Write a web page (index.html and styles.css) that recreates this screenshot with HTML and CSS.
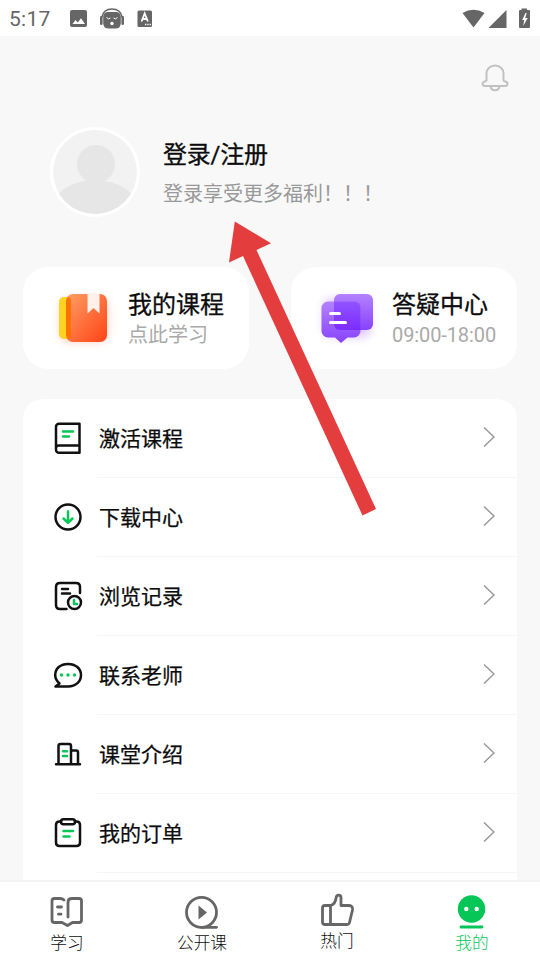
FILE: index.html
```html
<!DOCTYPE html>
<html lang="zh-CN">
<head>
<meta charset="utf-8">
<title>我的</title>
<link rel="stylesheet" href="styles.css">
</head>
<body>
<div class="screen">
  <header class="status">
    <span class="time">5:17</span>
    <svg class="status-left" width="84" height="22" viewBox="0 0 84 22">
      <rect x="1" y="2" width="17" height="17" rx="2" fill="#666"/>
      <path d="M3.500 16l3-4 2.300 2.400 3.200-4.200 4 5.800z" fill="#fff"/>
      <path d="M38 4h10q3.800 1 3.800 5v6q0 5.500-5.500 5.500h-6.600q-5.500 0-5.500-5.500V9q0-4 3.800-5z" fill="#666"/>
      <g fill="#666"><rect x="31" y="8" width="2.600" height="9" rx="1.300"/><rect x="52.400" y="8" width="2.600" height="9" rx="1.300"/></g>
      <path d="M33 9Q34.500 1 43 1T53 9" fill="none" stroke="#666" stroke-width="1.500"/>
      <path d="M37.500 9.500q2 2.500 4 .5M44.500 10q2 2 4-.5" fill="none" stroke="#fff" stroke-width="1"/>
      <circle cx="43" cy="15.500" r="1.700" fill="#fff"/>
      <rect x="68.500" y="2.500" width="14.500" height="16.500" rx="1.500" fill="#666"/>
      <path d="M72.500 13.500l3.200-8 3.200 8M73.500 11h4.500" fill="none" stroke="#fff" stroke-width="1.800"/>
      <path d="M76 16.500h6" stroke="#fff" stroke-width="1.300" stroke-dasharray="1.300 1"/>
    </svg>
    <svg class="status-right" width="70" height="22" viewBox="0 0 70 22">
      <g fill="#666"><path d="M.5 5Q11.500-1.500 22.500 5L11.500 19.500z"/><path d="M26.500 20L44.500 2v18z"/><path d="M59.500 2V.5h5.500V2h2q1 0 1 1v16q0 1-1 1h-9q-1 0-1-1V3q0-1 1-1z"/></g>
      <path d="M63.500 5l-3.300 7h2l-1 6 4.500-8h-2.500l1.500-5z" fill="#fff"/>
    </svg>
  </header>

  <div class="toolbar">
    <svg width="30" height="30" viewBox="0 0 30 30" fill="none" stroke="#c1c1c1" stroke-width="2">
      <path d="M6.500 17.500V10.500a8.500 8 0 0 1 17 0v7c0 .8 4 .7 4 3s-1 2.500-2.500 2.500H5c-1.500 0-2.500-.5-2.500-2.500s4-2.200 4-3z"/>
      <path d="M10.500 23.500c1 5 8 5 9 0"/>
    </svg>
  </div>

  <section class="profile">
    <svg width="90" height="90" viewBox="0 0 90 90">
      <defs><clipPath id="face"><circle cx="45" cy="45" r="42"/></clipPath></defs>
      <circle cx="45" cy="45" r="45" fill="#fff"/>
      <circle cx="45" cy="45" r="42" fill="#f2f2f2"/>
      <g clip-path="url(#face)" fill="#e6e6e6"><circle cx="46" cy="37" r="19"/><ellipse cx="45" cy="82" rx="43" ry="29"/></g>
    </svg>
    <div class="profile-text">
      <div class="title">登录/注册</div>
      <div class="hint">登录享受更多福利！！！</div>
    </div>
  </section>

  <section class="cards">
    <div class="card">
      <svg width="80" height="80" viewBox="0 0 80 80">
        <defs>
          <linearGradient id="book" x1="0" y1="0" x2="1" y2="1"><stop offset="0" stop-color="#ff9f65"/><stop offset="1" stop-color="#ff4316"/></linearGradient>
          <filter id="glow" x="-50%" y="-50%" width="200%" height="200%"><feGaussianBlur stdDeviation="5"/></filter>
        </defs>
        <rect x="13" y="22" width="46" height="42" rx="7" fill="#ff5a30" opacity=".35" filter="url(#glow)"/>
        <rect x="11" y="20" width="12" height="42" rx="5" fill="#ffd321"/>
        <rect x="18" y="17" width="41" height="48" rx="7" fill="url(#book)"/>
        <path d="M18 24q0-3 3-4 2 1 2 5v32q0 4-2 5-3-2-3-5z" fill="#ff7100"/>
        <path d="M39.500 16.500h12v20L45.500 31 39.500 36.500z" fill="#fff0ea"/>
      </svg>
      <div class="card-text"><div class="title">我的课程</div><div class="hint">点此学习</div></div>
    </div>
    <div class="card card-help">
      <svg width="80" height="80" viewBox="0 0 80 80">
        <defs>
          <linearGradient id="back" x1="0" y1="0" x2="0" y2="1"><stop offset="0" stop-color="#b382ff"/><stop offset="1" stop-color="#8842fb"/></linearGradient>
          <linearGradient id="cross" x1="0" y1="0" x2="0" y2="1"><stop offset="0" stop-color="#9253ff"/><stop offset="1" stop-color="#7622ff"/></linearGradient>
          <clipPath id="bubble"><rect x="22" y="17" width="39" height="36" rx="6"/></clipPath>
        </defs>
        <rect x="12" y="22" width="46" height="38" rx="7" fill="#8b42ff" opacity=".3" filter="url(#glow)"/>
        <rect x="22" y="17" width="39" height="36" rx="6" fill="url(#back)"/>
        <path d="M16 24.500h26a6.500 6.500 0 0 1 6.500 6.500v23a6.500 6.500 0 0 1-6.500 6.500h-6.500L29 66l-6-5.500h-7A6.500 6.500 0 0 1 9.500 54V31a6.500 6.500 0 0 1 6.500-6.500z" fill="url(#back)"/>
        <rect x="9.500" y="24.500" width="39" height="36" rx="6" fill="url(#cross)" clip-path="url(#bubble)"/>
        <path d="M18.500 36.500h9M18.500 45.500h15" stroke="#fff" stroke-width="3" stroke-linecap="round"/>
      </svg>
      <div class="card-text"><div class="title">答疑中心</div><div class="hint hours">09:00-18:00</div></div>
    </div>
  </section>

  <main class="list">
    <div class="row">
      <svg class="icon" viewBox="0 0 34 34"><path d="M28.500 2.800H8a3 3 0 0 0-3 3v23a3 3 0 0 0 3 3h20.500zM5 27q0-2.500 3-2.500h20.500"/><path class="green" d="M12 10.500h10M12 15.500h6"/></svg>
      <div class="row-body"><span>激活课程</span><svg class="arrow" viewBox="0 0 12 22"><path d="M1 1.500l10 9.500-10 9.500"/></svg></div>
    </div>
    <div class="row">
      <svg class="icon" viewBox="0 0 34 34"><circle cx="17" cy="17" r="12.500"/><path class="green" d="M17 11.500v11M12.500 18.500l4.500 4.300 4.500-4.300"/></svg>
      <div class="row-body"><span>下载中心</span><svg class="arrow" viewBox="0 0 12 22"><path d="M1 1.500l10 9.500-10 9.500"/></svg></div>
    </div>
    <div class="row">
      <svg class="icon" viewBox="0 0 34 34"><path d="M15.500 30H9q-4 0-4-4V8q0-4 4-4h16q4 0 4 4v6M11 10h6M11 14.500h8"/><circle cx="23.500" cy="23.500" r="6.500"/><path class="green" d="M23 21v4h3"/></svg>
      <div class="row-body"><span>浏览记录</span><svg class="arrow" viewBox="0 0 12 22"><path d="M1 1.500l10 9.500-10 9.500"/></svg></div>
    </div>
    <div class="row">
      <svg class="icon" viewBox="0 0 34 34"><path d="M4.500 28.500H17c8 0 13-5 13-11.500S24.500 5.900 17 5.900 4.200 10.500 4.200 17c0 4 2 6.500 4.300 8.500z"/><g class="dots"><circle cx="10.500" cy="17" r="1.700"/><circle cx="17" cy="17" r="1.700"/><circle cx="23.500" cy="17" r="1.700"/></g></svg>
      <div class="row-body"><span>联系老师</span><svg class="arrow" viewBox="0 0 12 22"><path d="M1 1.500l10 9.500-10 9.500"/></svg></div>
    </div>
    <div class="row">
      <svg class="icon" viewBox="0 0 34 34"><path d="M5 27.200h24M7.500 27V9q0-2 2-2H18q2 0 2 2v18M20 13.500h5q2 0 2 2V27"/><path class="green" d="M12 14.200h4M12 19h4"/></svg>
      <div class="row-body"><span>课堂介绍</span><svg class="arrow" viewBox="0 0 12 22"><path d="M1 1.500l10 9.500-10 9.500"/></svg></div>
    </div>
    <div class="row">
      <svg class="icon" viewBox="0 0 34 34"><path d="M10 5.500H8.500Q5 5.500 5 9v17.500Q5 30 8.500 30h17q3.500 0 3.500-3.500V9q0-3.500-3.500-3.500H24"/><rect x="10" y="3.300" width="14" height="5" rx="2.500"/><path class="green" d="M12.500 15h9.500M12.500 20.500h6"/></svg>
      <div class="row-body"><span>我的订单</span><svg class="arrow" viewBox="0 0 12 22"><path d="M1 1.500l10 9.500-10 9.500"/></svg></div>
    </div>
  </main>

  <nav class="tabs">
    <div class="tab">
      <svg viewBox="0 0 40 40"><path d="M17 8q-1.500-1.500-4-1.500H7.500Q5 6.500 5 9v19q0 2.500 2.500 2.500H15l5.500 3 5-3H32q2.500 0 2.500-2.500V9q0-2.500-2.500-2.500h-7q-4 0-4 4V25M10.500 15h4M11.500 22.200h2.500"/></svg>
      <span>学习</span>
    </div>
    <div class="tab">
      <svg viewBox="0 0 40 40"><circle cx="19.500" cy="20.300" r="15"/><path d="M19.500 35.300h15"/><path class="solid" d="M16.500 13.500l8.500 7-8.500 7z"/></svg>
      <span>公开课</span>
    </div>
    <div class="tab tab-hot">
      <svg viewBox="0 0 40 40"><path d="M14 15.500H8q-2.500 0-2.500 2.500v14q0 2.500 2.500 2.500h22q2 0 2.500-2l3-12.500q.5-4.500-3.500-4.500h-8V8q0-2.800-2.500-2.800-2 0-2.500 3-.7 5.500-5 7.300zM13.500 15.500v19"/></svg>
      <span>热门</span>
    </div>
    <div class="tab tab-active">
      <svg viewBox="0 0 40 40"><circle class="solid" cx="19.500" cy="17" r="13.700"/><g class="eyes"><circle cx="14.300" cy="17" r="2.200"/><circle cx="24.700" cy="17" r="2.200"/></g><path d="M9 35h21"/></svg>
      <span>我的</span>
    </div>
  </nav>
</div>

<svg class="pointer" width="150" height="296" viewBox="0 0 150 296"><path d="M6.800 1.500L43 23.200 28.500 30 148 289 134.500 295.500 15 36 1 42.500z" fill="#e43d3d"/></svg>
</body>
</html>
```

FILE: styles.css
```css
* { box-sizing: border-box; }

body {
  margin: 0;
  background: #f8f8f8;
  color: #0c0c0c;
  font-family: Roboto, "Noto Sans CJK SC", sans-serif;
  overflow: hidden;
}

svg { display: block; flex: none; }

.screen {
  width: 540px;
  height: 960px;
  display: flex;
  flex-direction: column;
}

.status {
  height: 36px;
  flex: none;
  display: flex;
  align-items: center;
  padding: 1px 8px 0 9px;
  background: #fff;
}

.time {
  width: 60px;
  padding-top: 1px;
  font-size: 21px;
  letter-spacing: 0.3px;
  color: #666;
}

.status-right { margin-left: auto; }

.toolbar {
  height: 91px;
  flex: none;
  display: flex;
  justify-content: flex-end;
  padding: 27px 30px 0 0;
}

.profile {
  display: flex;
  height: 140px;
  flex: none;
  padding-left: 50px;
  gap: 23px;
}

.profile-text { padding-top: 13px; }

.title {
  font-size: 24px;
  line-height: 30px;
  white-space: nowrap;
  -webkit-text-stroke: 0.3px #0c0c0c;
}

.profile .title { letter-spacing: -0.2px; }

.hint {
  font-size: 20px;
  line-height: 30px;
  white-space: nowrap;
  color: #aaa;
}

.profile .hint {
  margin-top: 9px;
  color: #999;
}

.hours { letter-spacing: -0.1px; }

.cards {
  display: flex;
  flex: none;
  gap: 42px;
  padding: 0 23px;
}

.card {
  width: 226px;
  height: 102px;
  display: flex;
  padding: 10px 0 0 25px;
  border-radius: 25px;
  background: #fff;
}

.card-help { padding-left: 21px; }
.card-text { padding-top: 13px; }

.list {
  flex: 1;
  min-height: 0;
  overflow: hidden;
  margin: 30px 23px 0;
  background: #fff;
  border-radius: 20px 20px 0 0;
}

.row {
  height: 79px;
  display: flex;
  padding-left: 28px;
}

.icon {
  width: 34px;
  height: 34px;
  margin: 22px 12px 0 0;
  fill: none;
  stroke: #111;
  stroke-width: 2.5;
  stroke-linecap: round;
  stroke-linejoin: round;
}

.green { stroke: #07c658; }
.dots { fill: #07c658; stroke: none; }

.row-body {
  flex: 1;
  display: flex;
  justify-content: space-between;
  align-items: center;
  padding: 0 22px 2px 2px;
  border-bottom: 1px solid #f5f5f5;
  font-size: 21px;
  -webkit-text-stroke: 0.25px #0c0c0c;
}

.arrow {
  width: 12px;
  height: 22px;
  fill: none;
  stroke: #999;
  stroke-width: 1.5;
}

.tabs {
  height: 80px;
  flex: none;
  display: flex;
  background: #fff;
  border-top: 2px solid #f5f5f5;
}

.tab {
  flex: 1;
  display: flex;
  flex-direction: column;
  align-items: center;
  gap: 2px;
  padding: 10px 1px 0 0;
  font-size: 16.7px;
  line-height: 20px;
  font-weight: 300;
}

.tab svg {
  width: 40px;
  height: 40px;
  fill: none;
  stroke: #666;
  stroke-width: 2.8;
  stroke-linecap: round;
  stroke-linejoin: round;
}

.tab .solid { fill: #666; stroke: none; }

.tab-hot { padding-top: 8px; }

.tab-active { color: #07c658; }
.tab-active svg { stroke: #07c658; }
.tab-active .solid { fill: #07c658; }
.tab-active .eyes { fill: #fff; stroke: none; }

/* Annotation arrow laid over the page */
.pointer {
  position: absolute;
  left: 228px;
  top: 220px;
}
```
